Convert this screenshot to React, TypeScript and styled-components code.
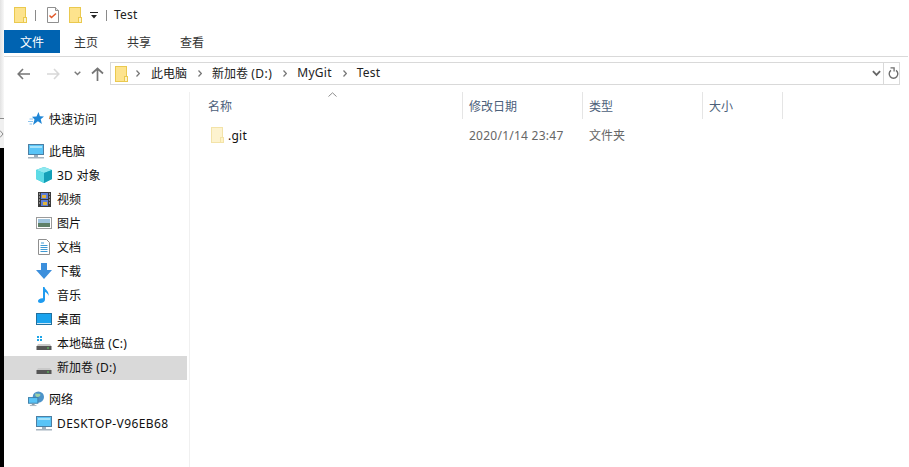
import React from "react";
import styled, { createGlobalStyle } from "styled-components";

const GlobalStyle = createGlobalStyle`
  html, body, #root {
    margin: 0;
    height: 100%;
    background: #fff;
    overflow: hidden;
  }
  body {
    font-family: "Noto Sans", "Noto Sans CJK SC", sans-serif;
    font-size: 12px;
    color: #1a1a1a;
  }
`;

const Page = styled.div`
  display: flex;
  height: 100%;
`;

const DesktopEdge = styled.div`
  width: 4px;
  flex: none;
  display: flex;
  flex-direction: column;
`;

const EdgeTop = styled.div`
  height: 118px;
  background: linear-gradient(to right, #e2e2e2, #f8f8f8);
  border-bottom: 1px solid #8c8c8c;
`;

const EdgeMiddle = styled.div`
  height: 29px;
  background: #f0f0f0;
  display: flex;
  align-items: center;
`;

const EdgeBottom = styled.div`
  flex: 1;
  background: #000;
`;

const Window = styled.div`
  flex: 1;
  min-width: 0;
  display: flex;
  flex-direction: column;
`;

const Gap = styled.span<{ $width: number }>`
  width: ${(p) => p.$width}px;
  flex: none;
`;

const Latin = styled.span<{ $spacing?: number }>`
  letter-spacing: ${(p) => p.$spacing ?? 0.25}px;
`;

const TitleBar = styled.div`
  height: 30px;
  display: flex;
  align-items: center;
  padding-left: 10px;
`;

const TitleSep = styled.span<{ $right: number }>`
  width: 1px;
  height: 11px;
  background: #8a8a8a;
  margin: 0 ${(p) => p.$right}px 0 8px;
`;

const TitleText = styled.span`
  color: #222;
  line-height: 16px;
`;

const Tabs = styled.div`
  height: 26px;
  display: flex;
  align-items: flex-start;
  border-bottom: 1px solid #d9d9d9;
  margin-right: 1px;
`;

const Tab = styled.div<{ $active?: boolean }>`
  width: ${(p) => (p.$active ? 56 : 53)}px;
  height: 23px;
  box-sizing: border-box;
  padding-right: ${(p) => (p.$active ? 0 : 1)}px;
  display: flex;
  align-items: center;
  justify-content: center;
  background: ${(p) => (p.$active ? "#0063b1" : "transparent")};
  color: ${(p) => (p.$active ? "#fff" : "#333")};
`;

const NavBar = styled.div`
  height: 35px;
  display: flex;
  align-items: flex-start;
  padding-top: 5px;
  box-sizing: border-box;
`;

const NavButtons = styled.div`
  width: 106px;
  height: 23px;
  flex: none;
  display: flex;
  align-items: center;
  padding-left: 13px;
  box-sizing: border-box;
`;

const AddressBox = styled.div`
  width: 790px;
  height: 23px;
  box-sizing: border-box;
  flex: none;
  display: flex;
  align-items: center;
  border: 1px solid #d9d9d9;
  padding-left: 4px;
`;

const Crumb = styled.span`
  color: #222;
  margin: 0 11px 0 10px;
  padding-bottom: 2px;
  white-space: nowrap;
`;

const CrumbFolder = styled.span`
  display: flex;
  margin-right: 8px;
`;

const FirstCrumbGap = styled.span`
  width: 1px;
`;

const AddressSpacer = styled.span`
  flex: 1;
`;

const DropdownButton = styled.span`
  width: 14px;
  height: 100%;
  display: flex;
  align-items: center;
  justify-content: center;
`;

const RefreshButton = styled.span`
  width: 16px;
  height: 100%;
  box-sizing: border-box;
  padding-left: 3px;
  display: flex;
  align-items: center;
  justify-content: center;
  border-left: 1px solid #d9d9d9;
`;

const Body = styled.div`
  flex: 1;
  display: flex;
  min-height: 0;
`;

const Sidebar = styled.nav`
  width: 185px;
  flex: none;
  padding-top: 16px;
  border-right: 1px solid #f0f0f0;
  box-sizing: content-box;
`;

const NavGroup = styled.div`
  margin-bottom: 8px;
`;

const NavRow = styled.div<{ $child?: boolean; $selected?: boolean }>`
  height: 24px;
  width: 183px;
  display: flex;
  align-items: center;
  padding-left: ${(p) => (p.$child ? 32 : 24)}px;
  padding-bottom: 2px;
  box-sizing: border-box;
  background: ${(p) => (p.$selected ? "#d9d9d9" : "transparent")};
  color: #111;
  white-space: nowrap;
`;

const NavIcon = styled.span`
  width: 16px;
  height: 16px;
  flex: none;
  margin-right: 5px;
  display: flex;
  align-items: center;
  justify-content: center;
`;

const Main = styled.main`
  flex: 1;
  position: relative;
`;

const SortCaret = styled.span`
  position: absolute;
  left: 138px;
  top: 0;
  display: flex;
`;

const HeaderRow = styled.div`
  display: flex;
  height: 27px;
`;

const HeaderCell = styled.div<{ $width: number }>`
  width: ${(p) => p.$width}px;
  box-sizing: border-box;
  padding-left: 6px;
  border-right: 1px solid #e5e5e5;
  color: #4c607a;
  display: flex;
  align-items: center;
`;

const NameHeader = styled(HeaderCell)`
  padding-left: 18px;
`;

const FileRow = styled.div`
  display: flex;
  height: 24px;
  margin-top: 4px;
  align-items: center;
`;

const NameCell = styled.div`
  width: 272px;
  display: flex;
  align-items: center;
  padding-left: 21px;
  box-sizing: border-box;
  color: #111;
`;

const DetailCell = styled.div<{ $width: number }>`
  width: ${(p) => p.$width}px;
  padding-left: 7px;
  box-sizing: border-box;
  color: #666;
`;

const FileIcon = styled.span`
  display: flex;
  margin-right: 4px;
`;

const Folder: React.FC<{ light?: boolean }> = ({ light }) => {
  const stroke = light ? "#f3e3a8" : "#eac94f";
  const fill = light ? "#fdf3cf" : "#fde38d";
  return (
    <svg width="13" height="16" viewBox="0 0 13 16">
      <rect x="0.5" y="0.5" width="11" height="15" fill={fill} stroke={stroke} />
      <rect x="9.5" y="10.5" width="3" height="5" fill="#fff3c4" stroke={stroke} />
    </svg>
  );
};

const CheckDoc = () => (
  <svg width="12" height="16" viewBox="0 0 12 16">
    <path d="M.5.5h8l3 3v12H.5z" fill="#fff" stroke="#8f8f8f" />
    <path d="M8.5.5v3h3" fill="#e8e8e8" stroke="#8f8f8f" />
    <path d="M2.5 8.5l2 2 4.5-4" fill="none" stroke="#e2592a" strokeWidth="1.5" />
  </svg>
);

const QuickDrop = () => (
  <svg width="8" height="7" viewBox="0 0 8 7">
    <rect x="0" y="0" width="8" height="1" fill="#222" />
    <path d="M1 3h6L4 6.5z" fill="#222" />
  </svg>
);

const ArrowLeft: React.FC<{ color: string }> = ({ color }) => (
  <svg width="13" height="12" viewBox="0 0 13 12">
    <path d="M6 1L1.2 6 6 11M1.5 6H13" fill="none" stroke={color} strokeWidth="1.6" />
  </svg>
);

const ArrowRight: React.FC<{ color: string }> = ({ color }) => (
  <svg width="13" height="12" viewBox="0 0 13 12">
    <path d="M7 1l4.8 5L7 11M11.5 6H0" fill="none" stroke={color} strokeWidth="1.6" />
  </svg>
);

const ArrowUp = () => (
  <svg width="13" height="14" viewBox="0 0 13 14">
    <path d="M1 6.5l5.5-5 5.5 5M6.5 2v12" fill="none" stroke="#767676" strokeWidth="1.7" />
  </svg>
);

const Chevron: React.FC<{ size?: number; color?: string }> = ({ size = 7, color = "#7a7a7a" }) => (
  <svg width={size} height={size - 2} viewBox="0 0 7 5">
    <path d="M.7.7L3.5 3.6 6.3.7" fill="none" stroke={color} strokeWidth="1.4" />
  </svg>
);

const CrumbArrow = () => (
  <svg width="4" height="7" viewBox="0 0 4 7">
    <path d="M.5.5L3.3 3.5.5 6.5" fill="none" stroke="#777" strokeWidth="1.2" />
  </svg>
);

const EdgeArrow = () => (
  <svg width="4" height="8" viewBox="0 0 4 8">
    <path d="M0 .5L3 4 0 7.500" fill="none" stroke="#8a8a8a" />
  </svg>
);

const Refresh = () => (
  <svg width="11" height="13" viewBox="0 0 11 13">
    <path d="M3 3.4a4.3 4.3 0 1 0 5 0" fill="none" stroke="#6d6d6d" strokeWidth="1.4" />
    <path d="M2.5 .8h3.600v3.800" fill="none" stroke="#6d6d6d" strokeWidth="1.3" />
  </svg>
);

const Star = () => (
  <svg width="16" height="15" viewBox="0 0 16 15">
    <path d="M10.500 0l1.400 4.300 4.100.1-3.300 2.800 1.200 4.800-4-2.700L5 13l1.500-5.500L4 4.700l4.500-.2z" fill="#1f86d6" />
    <path d="M1.500 7H5M0 9.500h5M1.500 12H4" stroke="#8cc4ee" />
  </svg>
);

const Monitor = () => (
  <svg width="16" height="15" viewBox="0 0 16 15">
    <rect x="0.500" y="0.500" width="15" height="10" fill="#59c4f7" stroke="#4d7fa3" />
    <rect x="2" y="2" width="12" height="2" fill="#a5e3fb" />
    <rect x="6" y="11" width="4" height="2" fill="#9db0bf" />
    <rect x="0" y="13" width="16" height="1.500" fill="#a6b4bf" />
  </svg>
);

const Cube = () => (
  <svg width="16" height="16" viewBox="0 0 16 16">
    <path d="M8 0l8 3v9l-8 4-8-4V3z" fill="#2bc4d4" />
    <path d="M8 6L0 3l8-3 8 3z" fill="#8ee8ef" />
    <path d="M8 6l8-3v9l-8 4z" fill="#14a0b8" />
    <path d="M0 3l8 3v10l-8-4z" fill="#5ddbe6" />
  </svg>
);

const Film = () => (
  <svg width="13" height="15" viewBox="0 0 13 15">
    <rect width="13" height="15" fill="#3b3b3b" />
    <rect x="3" y="1" width="7" height="6" fill="#5d7ed6" />
    <rect x="3" y="8" width="7" height="6" fill="#5d7ed6" />
    <rect x="4" y="3" width="4" height="3" fill="#e0b33c" />
    <rect x="5" y="10" width="4" height="3" fill="#e0b33c" />
    <path d="M1 2h1M1 5h1M1 8h1M1 11h1M11 2h1M11 5h1M11 8h1M11 11h1" stroke="#ddd" />
  </svg>
);

const Picture = () => (
  <svg width="16" height="12" viewBox="0 0 16 12">
    <rect x="0.500" y="0.500" width="15" height="11" fill="#fff" stroke="#9b9b9b" />
    <rect x="2" y="2" width="12" height="4" fill="#9fc4dd" />
    <rect x="2" y="6" width="12" height="4" fill="#5f8068" />
  </svg>
);

const Doc = () => (
  <svg width="12" height="16" viewBox="0 0 12 16">
    <path d="M.5.5h8l3 3v12H.5z" fill="#fff" stroke="#8f8f8f" />
    <path d="M3 4h3M2.500 6.500h7M2.500 8.500h7M2.500 10.500h7M2.500 12.500h7" stroke="#3f9ad4" />
  </svg>
);

const Download = () => (
  <svg width="16" height="16" viewBox="0 0 16 16">
    <path d="M5 0h6v7h5l-8 9-8-9h5z" fill="#3c8fdc" />
  </svg>
);

const Music = () => (
  <svg width="12" height="16" viewBox="0 0 12 16">
    <path d="M5 0h1.500c.5 3 5 4 4 9-.5-2-2-3.500-3.500-4v7.500c0 2-2 3.500-4.500 3.500C.8 16 0 15 0 14c0-1.500 2-3 5-2.800z" fill="#1e9bf0" />
  </svg>
);

const Desktop = () => (
  <svg width="16" height="12" viewBox="0 0 16 12">
    <rect width="16" height="12" fill="#20709f" />
    <rect x="1" y="1" width="14" height="9" fill="#1aa3ee" />
    <rect x="1" y="10" width="14" height="1" fill="#cde6f5" />
  </svg>
);

const Drive: React.FC<{ windows?: boolean }> = ({ windows }) => (
  <svg width="16" height="16" viewBox="0 0 16 16">
    {windows && <path d="M1 1h2v2H1zM4 1h2v2H4zM1 4h2v2H1zM4 4h2v2H4z" fill="#1ea5e8" />}
    <path d="M2 9h12l1.500 2.500H.5z" fill="#c9c9c9" />
    <rect x="0.500" y="11" width="15" height="4" fill="#555" />
    <rect x="11" y="12.500" width="2" height="1" fill="#5fd35f" />
  </svg>
);

const Network = () => (
  <svg width="17" height="16" viewBox="0 0 17 16">
    <circle cx="11" cy="6" r="6" fill="#4c93c9" />
    <path d="M8 2c2 1 4 0 5 1s-1 3-3 3-3-2-2-4z" fill="#9dd0a8" />
    <rect x="0.500" y="6.500" width="10" height="6" fill="#59c4f7" stroke="#3e7ea8" />
    <rect x="4" y="13" width="3" height="1.500" fill="#8a9ba8" />
    <rect x="2" y="14.500" width="7" height="1" fill="#a6b4bf" />
  </svg>
);

const Caret = () => (
  <svg width="9" height="5" viewBox="0 0 9 5">
    <path d="M.5 4.500L4.500.8l4 3.700" fill="none" stroke="#8d8d8d" />
  </svg>
);

const libraryItems: { icon: React.ReactNode; label: React.ReactNode; key: string; selected?: boolean }[] = [
  { key: "3d", icon: <Cube />, label: <><Latin>3D </Latin>对象</> },
  { key: "video", icon: <Film />, label: "视频" },
  { key: "pictures", icon: <Picture />, label: "图片" },
  { key: "docs", icon: <Doc />, label: "文档" },
  { key: "downloads", icon: <Download />, label: "下载" },
  { key: "music", icon: <Music />, label: "音乐" },
  { key: "desktop", icon: <Desktop />, label: "桌面" },
  { key: "c", icon: <Drive windows />, label: <>本地磁盘 <Latin>(C:)</Latin></> },
  { key: "d", icon: <Drive />, label: <>新加卷 <Latin>(D:)</Latin></>, selected: true },
];

const App: React.FC = () => {
  return (
    <Page>
      <GlobalStyle />
      <DesktopEdge>
        <EdgeTop />
        <EdgeMiddle>
          <EdgeArrow />
        </EdgeMiddle>
        <EdgeBottom />
      </DesktopEdge>
      <Window>
        <TitleBar>
          <Folder />
          <TitleSep $right={11} />
          <CheckDoc />
          <Gap $width={10} />
          <Folder />
          <Gap $width={8} />
          <QuickDrop />
          <TitleSep $right={7} />
          <TitleText>
            <Latin>Test</Latin>
          </TitleText>
        </TitleBar>
        <Tabs>
          <Tab $active>文件</Tab>
          <Tab>主页</Tab>
          <Tab>共享</Tab>
          <Tab>查看</Tab>
        </Tabs>
        <NavBar>
          <NavButtons>
            <ArrowLeft color="#767676" />
            <Gap $width={17} />
            <ArrowRight color="#d8d8d8" />
            <Gap $width={14} />
            <Chevron />
            <Gap $width={10} />
            <ArrowUp />
          </NavButtons>
          <AddressBox>
            <CrumbFolder>
              <Folder />
            </CrumbFolder>
            <CrumbArrow />
            <FirstCrumbGap />
            <Crumb>此电脑</Crumb>
            <CrumbArrow />
            <Crumb>
              新加卷 <Latin $spacing={0.5}>(D:)</Latin>
            </Crumb>
            <CrumbArrow />
            <Crumb>
              <Latin>MyGit</Latin>
            </Crumb>
            <CrumbArrow />
            <Crumb>
              <Latin>Test</Latin>
            </Crumb>
            <AddressSpacer />
            <DropdownButton>
              <Chevron size={9} color="#666" />
            </DropdownButton>
            <RefreshButton>
              <Refresh />
            </RefreshButton>
          </AddressBox>
        </NavBar>
        <Body>
          <Sidebar>
            <NavGroup>
              <NavRow>
                <NavIcon>
                  <Star />
                </NavIcon>
                快速访问
              </NavRow>
            </NavGroup>
            <NavGroup>
              <NavRow>
                <NavIcon>
                  <Monitor />
                </NavIcon>
                此电脑
              </NavRow>
              {libraryItems.map((item) => (
                <NavRow key={item.key} $child $selected={item.selected}>
                  <NavIcon>{item.icon}</NavIcon>
                  <span>{item.label}</span>
                </NavRow>
              ))}
            </NavGroup>
            <NavGroup>
              <NavRow>
                <NavIcon>
                  <Network />
                </NavIcon>
                网络
              </NavRow>
              <NavRow $child>
                <NavIcon>
                  <Monitor />
                </NavIcon>
                <Latin $spacing={0.4}>DESKTOP-V96EB68</Latin>
              </NavRow>
            </NavGroup>
          </Sidebar>
          <Main>
            <SortCaret>
              <Caret />
            </SortCaret>
            <HeaderRow>
              <NameHeader $width={273}>名称</NameHeader>
              <HeaderCell $width={120}>修改日期</HeaderCell>
              <HeaderCell $width={120}>类型</HeaderCell>
              <HeaderCell $width={80}>大小</HeaderCell>
            </HeaderRow>
            <FileRow>
              <NameCell>
                <FileIcon>
                  <Folder light />
                </FileIcon>
                <Latin>.git</Latin>
              </NameCell>
              <DetailCell $width={120}>
                <Latin>2020/1/14 23:47</Latin>
              </DetailCell>
              <DetailCell $width={120}>文件夹</DetailCell>
            </FileRow>
          </Main>
        </Body>
      </Window>
    </Page>
  );
};

export default App;
